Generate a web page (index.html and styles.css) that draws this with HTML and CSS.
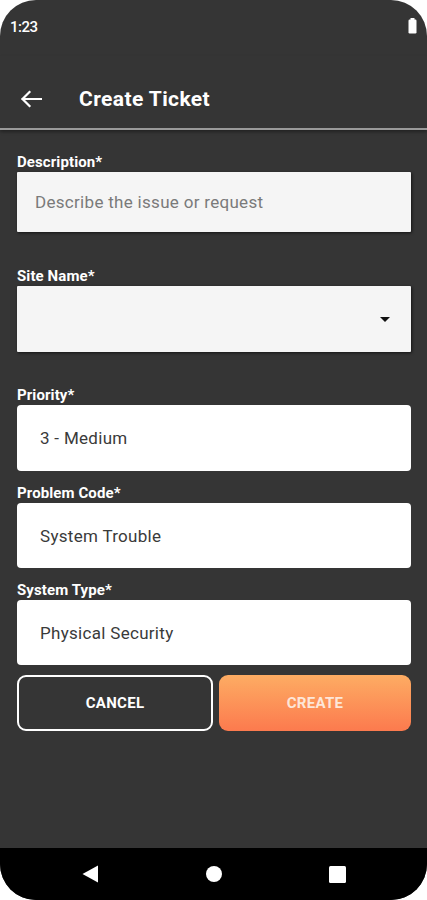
FILE: index.html
```html
<!DOCTYPE html>
<html lang="en">
<head>
<meta charset="utf-8">
<title>Create Ticket</title>
<link rel="stylesheet" href="styles.css">
</head>
<body>
<div class="screen">
  <div class="statusbar">
    <span class="time">1:23</span>
    <svg class="battery" width="9" height="16" viewBox="0 0 9 16"><rect x="2.5" y="0" width="4" height="2" fill="#fff"/><rect x="0.5" y="1.5" width="8" height="14" rx="1.2" fill="#fff"/></svg>
  </div>
  <div class="appbar">
    <svg class="back" width="22" height="18" viewBox="0 0 22 18"><path d="M21 9H2.5M9.5 2L2.5 9l7 7" fill="none" stroke="#fff" stroke-width="2.2" stroke-linecap="square"/></svg>
    <h1 class="title">Create Ticket</h1>
  </div>
  <main class="content">
    <div class="field field--wide">
      <div class="label">Description*</div>
      <div class="input input--flat input--desc"><span class="placeholder">Describe the issue or request</span></div>
    </div>
    <div class="field field--wide2">
      <div class="label">Site Name*</div>
      <div class="input input--flat input--select">
        <span></span>
        <svg class="caret" width="10" height="5" viewBox="0 0 10 5"><path d="M0 0h10L5 5z" fill="#111"/></svg>
      </div>
    </div>
    <div class="field">
      <div class="label">Priority*</div>
      <div class="input input--card">3 - Medium</div>
    </div>
    <div class="field">
      <div class="label">Problem Code*</div>
      <div class="input input--card input--short">System Trouble</div>
    </div>
    <div class="field field--last">
      <div class="label">System Type*</div>
      <div class="input input--card input--short">Physical Security</div>
    </div>
    <div class="actions">
      <button class="btn btn--cancel">CANCEL</button>
      <button class="btn btn--create">CREATE</button>
    </div>
  </main>
  <nav class="navbar">
    <svg width="17" height="18" viewBox="0 0 17 18"><path d="M16 0.5V17.5L0.5 9z" fill="#fff"/></svg>
    <svg width="16" height="16" viewBox="0 0 16 16"><circle cx="8" cy="8" r="8" fill="#fff"/></svg>
    <svg width="17" height="17" viewBox="0 0 17 17"><rect width="17" height="17" rx="1.5" fill="#fff"/></svg>
  </nav>
</div>
</body>
</html>
```

FILE: styles.css
```css
* { box-sizing: border-box; }
html, body { margin: 0; padding: 0; background: #fff; }
body { font-family: Roboto, "Noto Sans", sans-serif; }
.screen {
  width: 427px;
  height: 900px;
  background: #353535;
  border-radius: 36px;
  overflow: hidden;
  display: flex;
  flex-direction: column;
}
.statusbar {
  height: 56px;
  display: flex;
  align-items: center;
  justify-content: space-between;
  padding: 0 10px 2px 10px;
  color: #fff;
}
.time { font-size: 15px; font-weight: 500; letter-spacing: -0.5px; }
.battery { display: block; margin-top: -2px; }
.appbar {
  height: 74px;
  padding-top: 14px;
  display: flex;
  align-items: center;
  border-bottom: 2px solid #9a9a9a;
  box-shadow: 0 2px 3px rgba(0,0,0,0.35);
}
.back { margin-left: 20px; display: block; }
.title {
  margin: 0 0 0 37px;
  color: #fff;
  font-size: 21px;
  font-weight: 700;
  letter-spacing: 0.4px;
}
.content {
  flex: 1;
  padding: 24px 16px 0 17px;
}
.field { margin-bottom: 14px; }
.field--wide { margin-bottom: 36px; }
.field--wide2 { margin-bottom: 35px; }
.field--last { margin-bottom: 10px; }
.label {
  color: #fff;
  font-size: 15px;
  font-weight: 700;
  line-height: 16px;
  margin-bottom: 2px;
  letter-spacing: 0.1px;
}
.input {
  height: 66px;
  display: flex;
  align-items: center;
  font-size: 17px;
  letter-spacing: 0.3px;
  color: #3a3a3a;
}
.input--flat {
  background: #f5f5f5;
  border-radius: 1px;
  box-shadow: 1px 1px 3px rgba(0,0,0,0.6);
  padding: 0 18px;
}
.input--desc { height: 60px; }
.input--select { justify-content: space-between; padding-right: 21px; }
.caret { display: block; }
.placeholder { color: #7a7a7a; }
.input--card {
  background: #fff;
  border-radius: 4px;
  padding: 0 23px;
}
.input--short { height: 65px; }
.actions {
  display: flex;
  gap: 6px;
}
.btn {
  flex: 1 1 0;
  min-width: 0;
  height: 56px;
  padding: 0;
  border-radius: 9px;
  font-family: Roboto, "Noto Sans", sans-serif;
  font-size: 15px;
  font-weight: 700;
  letter-spacing: 0.3px;
  cursor: pointer;
}
.btn--cancel {
  background: #353535;
  border: 2px solid #fff;
  color: #fff;
}
.btn--create {
  background: linear-gradient(#fdac63, #fc7a4e);
  border: none;
  color: #fde6d8;
}
.navbar {
  height: 52px;
  background: #000;
  display: flex;
  align-items: center;
  padding: 0 81px 0 82px;
  justify-content: space-between;
}
.navbar svg { display: block; }
```
